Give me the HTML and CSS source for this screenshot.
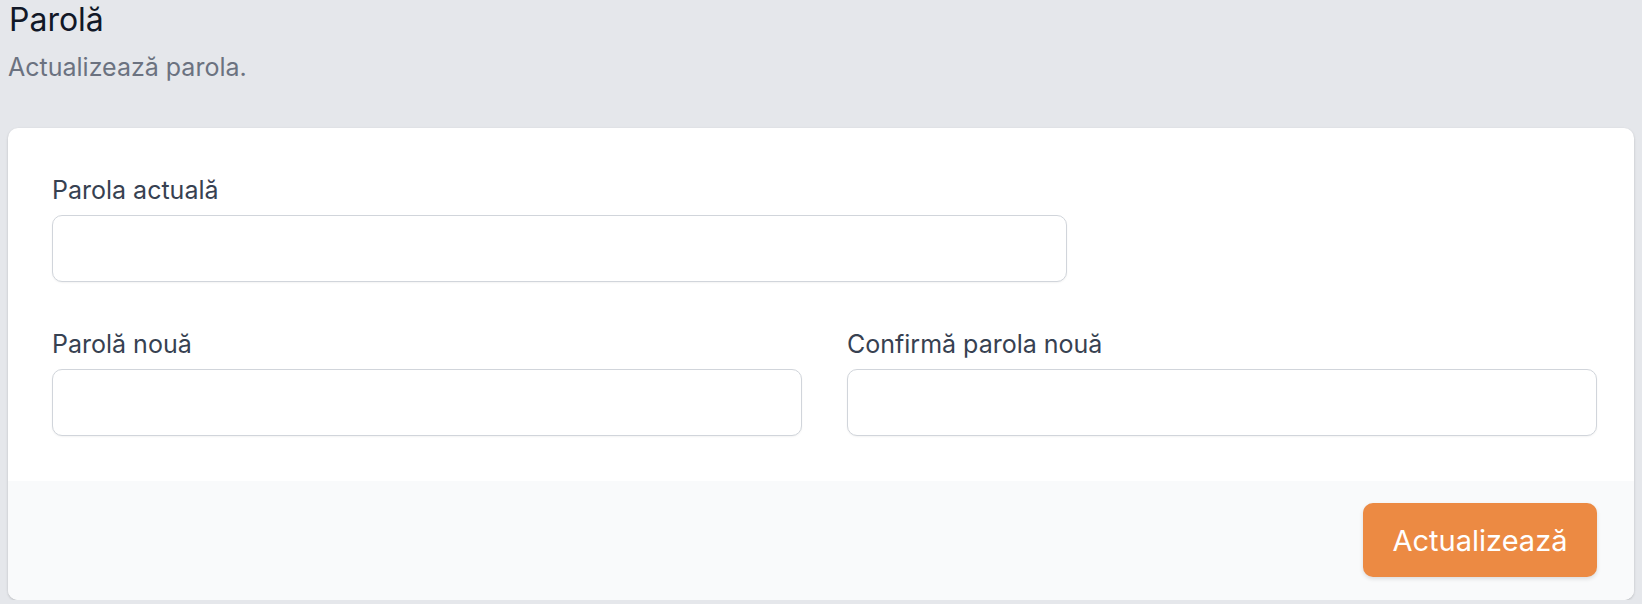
FILE: index.html
```html
<!DOCTYPE html>
<html lang="ro">

<head>
    <meta charset="UTF-8">
    <meta name="viewport" content="width=device-width, initial-scale=1.0">
    <title>Parolă</title>
    <link rel="stylesheet" href="styles.css">
</head>

<body>
    <div class="sectiune">
        <div class="antet">
            <h3 class="titlu">Parolă</h3>
            <p class="descriere">Actualizează parola.</p>
        </div>

        <form class="card">
            <div class="card-corp">
                <div class="grila">
                    <div class="camp camp-lat4">
                        <label for="parola_actuala">Parola actuală</label>
                        <input type="password" id="parola_actuala">
                    </div>
                    <div class="camp camp-lat3">
                        <label for="parola">Parolă nouă</label>
                        <input type="password" id="parola">
                    </div>
                    <div class="camp camp-lat3">
                        <label for="confirmare">Confirmă parola nouă</label>
                        <input type="password" id="confirmare">
                    </div>
                </div>
            </div>
            <div class="card-subsol">
                <button type="button" class="buton">Actualizează</button>
            </div>
        </form>
    </div>
</body>

</html>
```

FILE: styles.css
```css
body {
    margin: 0;
    background-color: #e5e7eb;
    font-family: Inter, "Noto Sans", sans-serif;
    color: #111827;
}

.sectiune {
    padding: 0 8px;
}

.antet {
    padding-left: 1px;
    height: 128px;
}

.titlu {
    margin: 0;
    font-size: 32px;
    font-weight: 400;
    line-height: 40px;
    color: #111827;
}

.descriere {
    margin: 11px 0 0 -1px;
    font-size: 25px;
    line-height: 32px;
    color: #6b7280;
}

.card {
    background-color: #fff;
    border-radius: 10px;
    box-shadow: 0 1px 3px rgba(0, 0, 0, 0.12), 0 1px 2px rgba(0, 0, 0, 0.08);
    overflow: hidden;
}

.card-corp {
    padding: 46px 37px 45px 44px;
}

.grila {
    display: grid;
    grid-template-columns: repeat(6, 1fr);
    column-gap: 45px;
    row-gap: 46px;
}

.camp-lat4 {
    grid-column: span 4;
}

.camp-lat3 {
    grid-column: span 3;
}

.camp label {
    display: block;
    font-size: 25px;
    line-height: 32px;
    font-weight: 400;
    color: #374151;
}

.camp input {
    display: block;
    box-sizing: border-box;
    width: 100%;
    height: 67px;
    margin-top: 9px;
    border: 1px solid #d1d5db;
    border-radius: 10px;
    box-shadow: 0 1px 2px rgba(0, 0, 0, 0.05);
    background-color: #fff;
    font-size: 24px;
    padding: 0 16px;
}

.card-subsol {
    background-color: #f9fafb;
    padding: 22px 37px 23px 44px;
    display: flex;
    justify-content: flex-end;
}

.buton {
    height: 74px;
    width: 234px;
    background-color: #ec8a43;
    color: #fff;
    border: none;
    border-radius: 10px;
    box-shadow: 0 2px 4px rgba(0, 0, 0, 0.12);
    font-family: Inter, "Noto Sans", sans-serif;
    font-size: 29px;
    font-weight: 400;
    cursor: pointer;
}
```
